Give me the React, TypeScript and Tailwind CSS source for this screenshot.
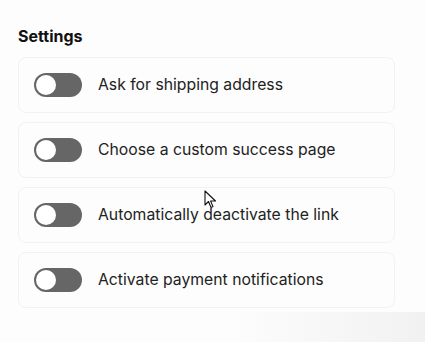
import React from "react";

const items = [
  "Ask for shipping address",
  "Choose a custom success page",
  "Automatically deactivate the link",
  "Activate payment notifications",
];

function Toggle() {
  return (
    <div className="relative h-6 w-12 shrink-0 rounded-full bg-[#666666]">
      <div className="absolute left-[2px] top-[2px] h-5 w-5 rounded-full bg-white" />
    </div>
  );
}

export default function App() {
  return (
    <div
      className="relative h-[342px] w-[425px] overflow-hidden bg-[#fdfdfd] text-[#1f1f1f]"
      style={{ fontFamily: "Inter, 'Noto Sans', sans-serif" }}
    >
      <div className="pl-[18px] pr-[30px] pt-[26px]">
        <h2 className="text-[16px] font-bold leading-5 text-[#111]">Settings</h2>
        <div className="mt-[11px] flex flex-col gap-[9px]">
          {items.map((t) => (
            <div
              key={t}
              className="flex h-[56px] items-center gap-4 rounded-lg border border-[#f2f2f2] bg-[#fdfdfd] pl-[15px]"
            >
              <Toggle />
              <span className="text-[15.75px] leading-5 text-[#222]">{t}</span>
            </div>
          ))}
        </div>
      </div>
      <div className="pointer-events-none absolute bottom-0 right-0 h-[30px] w-[200px] bg-gradient-to-l from-[#ececec] to-transparent opacity-70" />
      <svg
        className="absolute left-[204px] top-[190px]"
        width="13"
        height="19"
        viewBox="0 0 13 19"
      >
        <path
          d="M1 1 L1 15 L4.5 11.5 L7 17.5 L9 16.6 L6.6 11 L11.5 11 Z"
          fill="white"
          stroke="#111"
          strokeWidth="1.1"
          strokeLinejoin="round"
        />
      </svg>
    </div>
  );
}
